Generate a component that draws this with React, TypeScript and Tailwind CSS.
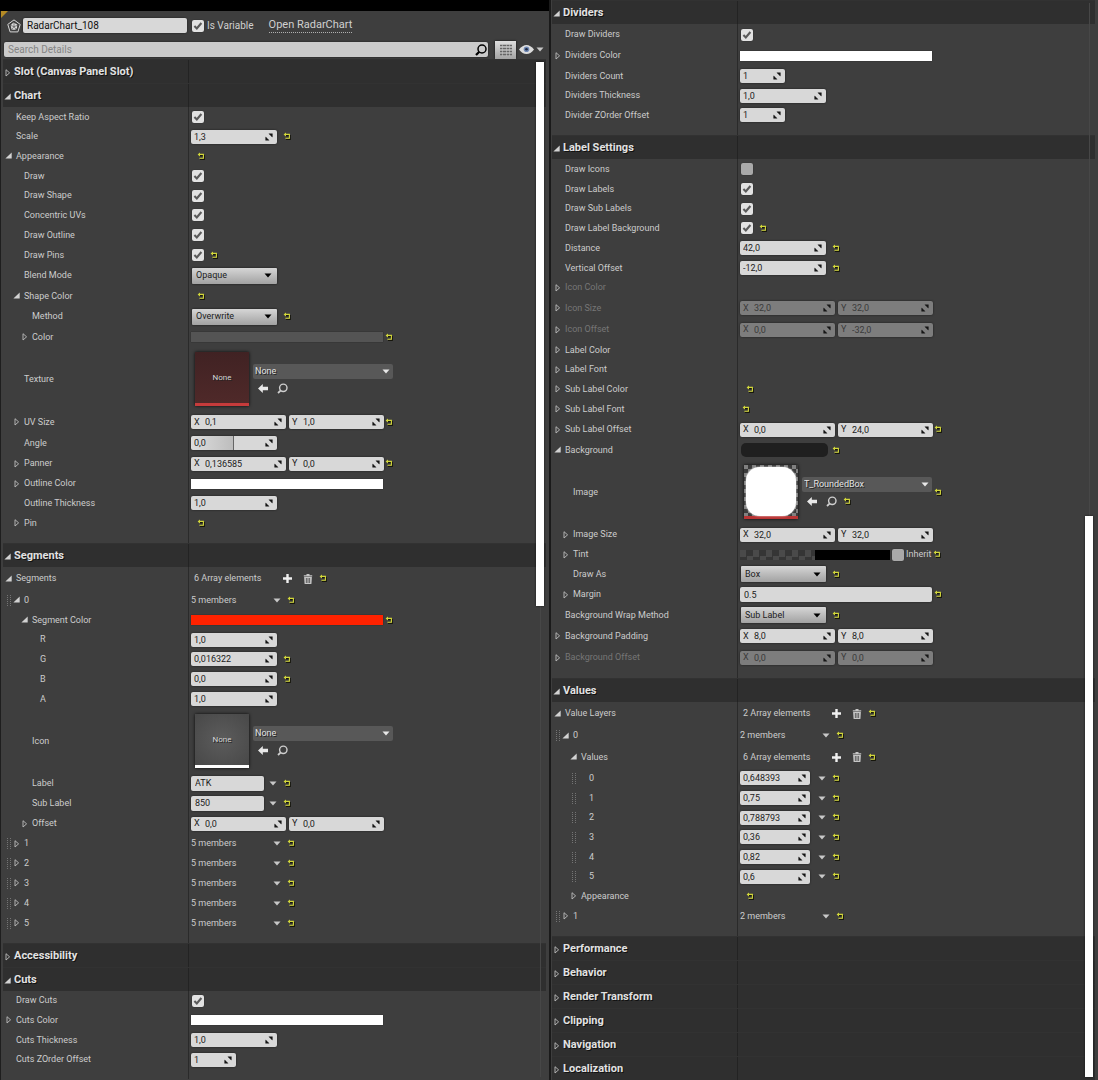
import React, { createContext, useContext, useId } from "react";

type Height = 19 | 20 | 21 | 22 | 23 | 64;
type Level = 0 | 1 | 2 | 3;

const rowHeight: Record<Height, string> = {
  19: "h-[19px]",
  20: "h-5",
  21: "h-[21px]",
  22: "h-[22px]",
  23: "h-[23px]",
  64: "h-16",
};

const indent: Record<Level, string> = {
  0: "pl-[5px]",
  1: "pl-[13px]",
  2: "pl-[21px]",
  3: "pl-[29px]",
};

const handleIndent: Record<Level, string> = {
  0: "pl-0",
  1: "pl-[7px]",
  2: "pl-[15px]",
  3: "pl-[23px]",
};

const RowContext = createContext({ id: "", label: "" });

/* ---------- glyphs ---------- */

function Arrow({ open }: { open?: boolean }) {
  return open ? (
    <svg viewBox="0 0 8 8" className="size-2 shrink-0" aria-hidden="true">
      <path d="M6.7 0.4V6.6H0.4Z" fill="#d2d2d2" />
    </svg>
  ) : (
    <svg viewBox="0 0 8 8" className="size-2 shrink-0" aria-hidden="true">
      <path d="M2 0.7V7L5.6 3.85Z" fill="none" stroke="#bdbdbd" strokeWidth="0.9" />
    </svg>
  );
}

function Handle() {
  return (
    <svg viewBox="0 0 4 11" className="mr-0.5 h-[11px] w-1 shrink-0" aria-hidden="true">
      <path d="M0.5 0V11M3.5 0V11" stroke="#747474" strokeDasharray="1 1" />
    </svg>
  );
}

function Caret({ className = "text-[#c8c8c8]" }: { className?: string }) {
  return (
    <svg viewBox="0 0 8 5" className={"h-[5px] w-2 shrink-0 " + className} aria-hidden="true">
      <path d="M0.5 0.5H7.5L4 4.5Z" fill="currentColor" />
    </svg>
  );
}

function Reset({ className = "ml-[7px]" }: { className?: string }) {
  const { label } = useContext(RowContext);
  return (
    <button type="button" aria-label={"Reset " + label} className={"shrink-0 " + className}>
      <svg viewBox="0.6 0.8 7 7" className="block size-[7px] overflow-visible" aria-hidden="true">
        <path d="M2.5 3.4H6.9V7.3H2.6" fill="none" stroke="#16160c" strokeWidth="1.1" />
        <path d="M2 2.2H6V6.1H2" fill="none" stroke="#d3d83a" strokeWidth="1.1" />
        <path d="M0.2 2.2L2.6 0.2V4.2Z" fill="#d3d83a" />
      </svg>
    </button>
  );
}

function Spin() {
  return (
    <svg viewBox="0 0 8 8" className="mr-1 size-2 shrink-0" aria-hidden="true">
      <path d="M3.4 0.4H7.6V4.6Q6.6 1.9 3.4 0.4Z" fill="#151515" />
      <path d="M0.4 3.4V7.6H4.6Q1.6 6.4 0.4 3.4Z" fill="#151515" />
      <path d="M4 1H7V4Z M1 4V7H4Z" fill="#151515" />
    </svg>
  );
}

/* ---------- controls ---------- */

function Check({ off, id, label }: { off?: boolean; id?: string; label?: string }) {
  const row = useContext(RowContext);
  return (
    <span className="relative ml-px block size-3 shrink-0">
      <input
        type="checkbox"
        id={id ?? row.id}
        aria-label={label}
        defaultChecked={!off}
        className="peer block size-3 appearance-none rounded-[2px] bg-[#a9a9a9] shadow-[0_0_1px_#1c1c1c] checked:bg-[#e2e2e2]"
      />
      <svg
        viewBox="0 0 12 12"
        className="pointer-events-none absolute inset-0 hidden size-3 peer-checked:block"
        aria-hidden="true"
      >
        <path d="M2.4 6L4.8 8.4L9.4 3" fill="none" stroke="#5a5a5a" strokeWidth="2.1" />
      </svg>
    </span>
  );
}

const field = "flex items-center rounded-[2px] shadow-[0_0_2px_#1a1a1a]";

function Num({
  value,
  width = "w-[86px]",
  bg = "bg-[#d8d8d8]",
}: {
  value: string;
  width?: string;
  bg?: string;
}) {
  const { id } = useContext(RowContext);
  return (
    <span className={field + " h-[14px] shrink-0 " + width + " " + bg}>
      <input id={id} defaultValue={value} className="h-[14px] w-0 flex-1 bg-transparent pl-[3px] text-[#1c1c1c] outline-none" />
      <Spin />
    </span>
  );
}

function Axis({ name, value, disabled }: { name: string; value: string; disabled?: boolean }) {
  const { label } = useContext(RowContext);
  return (
    <label
      className={
        field + " h-[14px] w-[95px] shrink-0 text-[#1c1c1c] " + (disabled ? "bg-[#7d7d7d]" : "bg-[#d8d8d8]")
      }
    >
      <span className={"w-3.5 pl-[3px] " + (disabled ? "text-[#3a3a3a]" : "")}>{name}</span>
      <input
        aria-label={label + " " + name}
        disabled={disabled}
        defaultValue={value}
        className="h-[14px] w-0 flex-1 bg-transparent text-[#1c1c1c] outline-none disabled:text-[#3a3a3a]"
      />
      <Spin />
    </label>
  );
}

function Vec({ x, y, disabled }: { x: string; y: string; disabled?: boolean }) {
  return (
    <span className="flex gap-[3px]">
      <Axis name="X" value={x} disabled={disabled} />
      <Axis name="Y" value={y} disabled={disabled} />
    </span>
  );
}

function Text({ value, width }: { value: string; width: string }) {
  const { id } = useContext(RowContext);
  return (
    <input
      id={id}
      defaultValue={value}
      className={"h-[15px] shrink-0 rounded-[2px] bg-[#d8d8d8] px-1 text-[#1c1c1c] shadow-[0_0_2px_#1a1a1a] outline-none " + width}
    />
  );
}

function Menu({ value }: { value: string }) {
  const { id } = useContext(RowContext);
  return (
    <span className="relative ml-px flex h-4 w-[85px] shrink-0 items-center">
      <select
        id={id}
        className="h-4 w-full appearance-none rounded-[1px] bg-linear-to-b from-[#d6d6d6] to-[#a2a2a2] pl-1 text-[#1c1c1c] shadow-[0_0_2px_#111]"
      >
        <option>{value}</option>
      </select>
      <Caret className="pointer-events-none absolute right-[5px] text-black" />
    </span>
  );
}

function Swatch({ color }: { color: string }) {
  const { id } = useContext(RowContext);
  return <button type="button" id={id} className={"h-2.5 w-48 shrink-0 shadow-[0_0_1px_#222] " + color} />;
}

function CaretButton({ className }: { className: string }) {
  const { label } = useContext(RowContext);
  return (
    <button type="button" aria-label={"Options for " + label} className={className}>
      <Caret />
    </button>
  );
}

function Members({ count }: { count: number }) {
  return (
    <>
      <span className="w-[82px] shrink-0">{count} members</span>
      <CaretButton className="" />
      <Reset />
    </>
  );
}

function ArrayTools({ count }: { count: number }) {
  return (
    <>
      <span className="ml-[3px] w-[89px] shrink-0">{count} Array elements</span>
      <button type="button" aria-label="Add element">
        <svg viewBox="0 0 9 9" className="block size-[9px]" aria-hidden="true">
          <path d="M4.5 0V9M0 4.5H9" stroke="#f0f0f0" strokeWidth="2.4" />
        </svg>
      </button>
      <button type="button" aria-label="Remove all elements" className="ml-[11px]">
        <svg viewBox="0 0 10 10" className="block size-2.5" aria-hidden="true">
          <path d="M0.8 1.2H3.5V0H6.5V1.2H9.2V2.4H0.8Z" fill="#c6c6c6" />
          <path d="M1.1 3H8.9L8.4 10H1.6Z" fill="#c6c6c6" />
          <path d="M3.4 4V9M5 4V9M6.6 4V9" stroke="#4a4a4a" strokeWidth="0.8" />
        </svg>
      </button>
      <Reset />
    </>
  );
}

function Asset({
  name,
  width = "w-[140px]",
  reset,
  thumb,
}: {
  name: string;
  width?: string;
  reset?: boolean;
  thumb: React.ReactNode;
}) {
  const { id } = useContext(RowContext);
  return (
    <>
      {thumb}
      <span className="ml-1 flex flex-col gap-1">
        <span className={"relative flex h-[15px] items-center " + width}>
          <select
            id={id}
            className="h-[15px] w-full appearance-none rounded-[2px] bg-[#585858] pl-0.5 text-[#e2e2e2] [text-shadow:1px_1px_0_#222]"
          >
            <option>{name}</option>
          </select>
          <Caret className="pointer-events-none absolute right-[3px] text-[#e8e8e8]" />
        </span>
        <span className="flex h-3 items-center pl-[5px]">
          <button type="button" aria-label="Use selected asset">
            <svg viewBox="0 0 10 9" className="block h-[9px] w-2.5" aria-hidden="true">
              <path d="M0 4.5L4.8 0V2.7H10V6.3H4.8V9Z" fill="#e8e8e8" />
            </svg>
          </button>
          <button type="button" aria-label="Browse to asset" className="ml-[9px] text-[#cfcfcf]">
            <svg viewBox="0 0 11 11" className="block size-[11px]" aria-hidden="true">
              <circle cx="6.3" cy="4.8" r="3.7" fill="none" stroke="currentColor" strokeWidth="1.4" />
              <path d="M3.8 7.4L1 10" stroke="currentColor" strokeWidth="1.8" />
            </svg>
          </button>
          {reset && <Reset />}
        </span>
      </span>
    </>
  );
}

const thumbBase = "ml-1 flex size-[54px] shrink-0 shadow-[0_0_3px_#0a0a0a]";

function EmptyThumb({ tone }: { tone: string }) {
  return (
    <button
      type="button"
      className={thumbBase + " items-center justify-center border-b-3 text-[8px] text-[#d4d4d4] [text-shadow:1px_1px_0_#222] " + tone}
    >
      None
    </button>
  );
}

/* ---------- structure ---------- */

function Row({
  label,
  level = 0,
  h = 20,
  open,
  closed,
  handle,
  dim,
  plain,
  children,
}: {
  label: string;
  level?: Level;
  h?: Height;
  open?: boolean;
  closed?: boolean;
  handle?: boolean;
  dim?: boolean;
  plain?: boolean;
  children?: React.ReactNode;
}) {
  const id = useId();
  const tone = dim ? "text-[#767676]" : "text-[#cccccc]";
  return (
    <RowContext.Provider value={{ id, label }}>
      <div className={"grid grid-cols-[189px_minmax(0,1fr)] " + rowHeight[h]}>
        <div
          className={
            "flex items-center border-r border-[#2a2a2a] whitespace-nowrap " +
            (handle ? handleIndent[level] : indent[level])
          }
        >
          {handle && <Handle />}
          {open || closed ? (
            <button type="button" aria-expanded={!!open} aria-label={label} className="shrink-0">
              <Arrow open={open} />
            </button>
          ) : (
            <span className="w-2 shrink-0" />
          )}
          {plain ? (
            <span className={"ml-[3px] " + tone}>{label}</span>
          ) : (
            <label htmlFor={id} className={"ml-[3px] " + tone}>
              {label}
            </label>
          )}
        </div>
        <div className="flex items-center pl-0.5 whitespace-nowrap">{children}</div>
      </div>
    </RowContext.Provider>
  );
}

function Category({ title, open, children }: { title: string; open?: boolean; children?: React.ReactNode }) {
  return (
    <section>
      <h2 className="mx-[3px] border-t border-[#323232] bg-[#2f2f2f]">
        <button type="button" aria-expanded={!!open} className="grid h-[23px] w-full grid-cols-[186px_minmax(0,1fr)] text-left">
          <span className="flex h-full items-center gap-0.5 border-r border-[#232323] pl-px text-[11px] font-bold text-[#e2e2e2] [text-shadow:1px_1px_0_#111]">
            <span className="pt-0.5">
              <Arrow open={open} />
            </span>
            {title}
          </span>
        </button>
      </h2>
      {children}
      {open && <div className="h-2.5 w-[189px] border-r border-[#2a2a2a]" />}
    </section>
  );
}

function Scrollbar({ thumb }: { thumb: string }) {
  return (
    <div className="absolute inset-y-[3px] right-[5px] w-2">
      <div className="mx-auto h-full w-px bg-[#474747]" />
      <div className={"absolute inset-x-0 bg-white shadow-[0_0_2px_#111] " + thumb} />
    </div>
  );
}

function Header() {
  return (
    <header className="relative">
      <div className="h-[11px] bg-black" />
      <svg viewBox="0 0 7 7" className="absolute top-[11px] left-px size-[7px]" aria-hidden="true">
        <path d="M0 0H7L0 7Z" fill="#b48a24" />
      </svg>
      <div className="flex h-[29px] items-center pl-[7px] text-[10px] text-[#d0d0d0]">
        <svg viewBox="0 0 14 14" className="size-3.5 shrink-0" fill="none" stroke="#d8d8d8" aria-hidden="true">
          <path d="M7 0.9L13.2 5.4L10.9 12.9H3.1L0.8 5.4Z" />
          <path d="M6.4 3.4L10.2 5.4L10 9L8.4 10.8H4.6L3.6 6.2Z" fill="#dcdcdc" stroke="none" />
          <path d="M7 2.5V7.6M12.2 5.8L7 7.6M10.2 12L7 7.6M3.8 12L7 7.6M1.8 5.8L7 7.6" stroke="#555" strokeWidth="0.7" />
        </svg>
        <input
          aria-label="Widget name"
          defaultValue="RadarChart_108"
          className="ml-0.5 h-[15px] w-[164px] shrink-0 rounded-[2px] bg-[#d8d8d8] px-1 text-[#111] shadow-[0_0_2px_#1a1a1a] outline-none"
        />
        <span className="ml-1">
          <Check id="is-variable" />
        </span>
        <label htmlFor="is-variable" className="ml-[3px]">
          Is Variable
        </label>
        <a href="#radar-chart" className="ml-[15px] border-b border-dotted border-[#b0b0b0] pb-0.5 text-[11px]">
          Open RadarChart
        </a>
      </div>
      <div className="flex h-[19px] items-center pl-1">
        <div className={field + " h-[15px] min-w-0 flex-1 bg-[#cbcbcb]"}>
          <input
            type="search"
            aria-label="Search Details"
            placeholder="Search Details"
            className="h-[15px] min-w-0 flex-1 bg-transparent pl-1 text-[10px] outline-none placeholder:text-[#858585]"
          />
          <button type="button" aria-label="Search" className="mr-px text-black">
            <svg viewBox="0 0 12 12" className="block size-3" aria-hidden="true">
              <circle cx="7" cy="5" r="4" fill="none" stroke="currentColor" strokeWidth="1.5" />
              <path d="M4.3 7.7L1 11" stroke="currentColor" strokeWidth="2.2" />
            </svg>
          </button>
        </div>
        <button
          type="button"
          aria-label="Property matrix"
          className="ml-[7px] flex h-[18px] w-[21px] shrink-0 items-center justify-center bg-linear-to-b from-[#dedede] to-[#a4a4a4] shadow-[0_0_2px_#111]"
        >
          <svg viewBox="0 0 12 12" className="size-3" aria-hidden="true">
            <path d="M0 1.5H12M0 4.5H12M0 7.5H12M0 10.5H12" stroke="#666" strokeWidth="1.4" />
            <path d="M2.5 0V12M6.5 0V12M9.5 0V12" stroke="#c4c4c4" strokeWidth="0.6" />
          </svg>
        </button>
        <button type="button" aria-label="View options" className="mr-[5px] ml-[3px] flex shrink-0 items-center gap-0.5">
          <svg viewBox="0 0 15 9" className="h-[9px] w-[15px]" aria-hidden="true">
            <path d="M0 4.5Q3.5 0 7.5 0T15 4.5Q11.5 9 7.5 9T0 4.5Z" fill="#dcdcdc" />
            <circle cx="7.5" cy="4.3" r="2.8" fill="#6f88b4" />
            <circle cx="7.5" cy="4.3" r="1.3" fill="#1d2740" />
          </svg>
          <Caret />
        </button>
      </div>
    </header>
  );
}

function LeftPanel() {
  return (
    <div className="flex flex-col border-l border-[#1e1e1e] bg-[#3e3e3e]">
      <div className="-ml-px">
        <Header />
      </div>
      <div className="relative -ml-px flex-1">
        <Category title="Slot (Canvas Panel Slot)" />
        <Category title="Chart" open>
          <Row label="Keep Aspect Ratio"><Check /></Row>
          <Row label="Scale" h={19}><Num value="1,3" /><Reset /></Row>
          <Row label="Appearance" open plain><Reset /></Row>
          <Row label="Draw" level={1}><Check /></Row>
          <Row label="Draw Shape" level={1} h={19}><Check /></Row>
          <Row label="Concentric UVs" level={1}><Check /></Row>
          <Row label="Draw Outline" level={1}><Check /></Row>
          <Row label="Draw Pins" level={1}><Check /><Reset /></Row>
          <Row label="Blend Mode" level={1} h={21}><Menu value="Opaque" /></Row>
          <Row label="Shape Color" level={1} open plain><Reset /></Row>
          <Row label="Method" level={2} h={21}><Menu value="Overwrite" /><Reset /></Row>
          <Row label="Color" level={2} closed><Swatch color="bg-[#545454]" /><Reset className="ml-[3px]" /></Row>
          <Row label="Texture" level={1} h={64}>
            <Asset name="None" thumb={<EmptyThumb tone="border-[#c63b3b] bg-linear-to-b from-[#402223] to-[#4f2929]" />} />
          </Row>
          <Row label="UV Size" level={1} closed plain h={22}><Vec x="0,1" y="1,0" /><Reset className="ml-0.5" /></Row>
          <Row label="Angle" level={1}>
            <Num value="0,0" bg="bg-[linear-gradient(to_right,#dedede_0%,#bdbdbd_49%,#666_49%,#666_50%,#d8d8d8_50%)]" />
          </Row>
          <Row label="Panner" level={1} closed plain h={21}><Vec x="0,136585" y="0,0" /><Reset className="ml-0.5" /></Row>
          <Row label="Outline Color" level={1} closed h={19}><Swatch color="bg-white" /></Row>
          <Row label="Outline Thickness" level={1}><Num value="1,0" /></Row>
          <Row label="Pin" level={1} closed plain><Reset /></Row>
        </Category>
        <Category title="Segments" open>
          <Row label="Segments" open plain h={23}><ArrayTools count={6} /></Row>
          <Row label="0" level={1} open handle plain><Members count={5} /></Row>
          <Row label="Segment Color" level={2} open><Swatch color="bg-[#ff2200]" /><Reset className="ml-[3px]" /></Row>
          <Row label="R" level={3} h={19}><Num value="1,0" /></Row>
          <Row label="G" level={3}><Num value="0,016322" /><Reset /></Row>
          <Row label="B" level={3}><Num value="0,0" /><Reset /></Row>
          <Row label="A" level={3}><Num value="1,0" /></Row>
          <Row label="Icon" level={2} h={64}>
            <Asset name="None" thumb={<EmptyThumb tone="border-white bg-radial from-[#5c5c5c] to-[#484848]" />} />
          </Row>
          <Row label="Label" level={2}>
            <Text value="ATK" width="w-[73px]" /><CaretButton className="ml-[5px]" /><Reset />
          </Row>
          <Row label="Sub Label" level={2}>
            <Text value="850" width="w-[73px]" /><CaretButton className="ml-[5px]" /><Reset />
          </Row>
          <Row label="Offset" level={2} closed plain h={21}><Vec x="0,0" y="0,0" /></Row>
          <Row label="1" level={1} closed handle plain h={19}><Members count={5} /></Row>
          <Row label="2" level={1} closed handle plain><Members count={5} /></Row>
          <Row label="3" level={1} closed handle plain><Members count={5} /></Row>
          <Row label="4" level={1} closed handle plain><Members count={5} /></Row>
          <Row label="5" level={1} closed handle plain><Members count={5} /></Row>
        </Category>
        <Category title="Accessibility" />
        <Category title="Cuts" open>
          <Row label="Draw Cuts" h={19}><Check /></Row>
          <Row label="Cuts Color" closed><Swatch color="bg-white" /></Row>
          <Row label="Cuts Thickness"><Num value="1,0" /></Row>
          <Row label="Cuts ZOrder Offset" h={19}><Num value="1" width="w-[45px]" /></Row>
        </Category>
        <Scrollbar thumb="top-0 h-[53.6%]" />
      </div>
    </div>
  );
}

const layerValues: { value: string; h: Height }[] = [
  { value: "0,648393", h: 20 },
  { value: "0,75", h: 20 },
  { value: "0,788793", h: 19 },
  { value: "0,36", h: 20 },
  { value: "0,82", h: 20 },
  { value: "0,6", h: 19 },
];

function RightPanel() {
  return (
    <div className="relative border-l-2 border-[#1a1a1a] bg-[#3e3e3e]">
      <div className="-ml-0.5">
        <Category title="Dividers" open>
          <Row label="Draw Dividers" h={21}><Check /></Row>
          <Row label="Dividers Color" closed h={21}><Swatch color="bg-white" /></Row>
          <Row label="Dividers Count"><Num value="1" width="w-[45px]" /></Row>
          <Row label="Dividers Thickness" h={19}><Num value="1,0" /></Row>
          <Row label="Divider ZOrder Offset"><Num value="1" width="w-[45px]" /></Row>
        </Category>
        <Category title="Label Settings" open>
          <Row label="Draw Icons"><Check off /></Row>
          <Row label="Draw Labels"><Check /></Row>
          <Row label="Draw Sub Labels" h={19}><Check /></Row>
          <Row label="Draw Label Background"><Check /><Reset /></Row>
          <Row label="Distance"><Num value="42,0" /><Reset /></Row>
          <Row label="Vertical Offset"><Num value="-12,0" /><Reset /></Row>
          <Row label="Icon Color" closed dim plain h={19} />
          <Row label="Icon Size" closed dim plain h={22}><Vec x="32,0" y="32,0" disabled /></Row>
          <Row label="Icon Offset" closed dim plain h={21}><Vec x="0,0" y="-32,0" disabled /></Row>
          <Row label="Label Color" closed plain />
          <Row label="Label Font" closed plain h={19} />
          <Row label="Sub Label Color" closed plain><Reset /></Row>
          <Row label="Sub Label Font" closed plain><Reset className="ml-[3px]" /></Row>
          <Row label="Sub Label Offset" closed plain h={21}><Vec x="0,0" y="24,0" /><Reset className="ml-0.5" /></Row>
          <Row label="Background" open plain>
            <span className="ml-px h-3.5 w-[87px] rounded-[5px] bg-[#1f1f1f]" /><Reset className="ml-[5px]" />
          </Row>
          <Row label="Image" level={1} h={64}>
            <Asset
              name="T_RoundedBox"
              width="w-[130px]"
              reset
              thumb={
                <button
                  type="button"
                  aria-label="T_RoundedBox thumbnail"
                  className={thumbBase + " border-b-3 border-[#b93434] bg-[repeating-conic-gradient(#3a3a3a_0_25%,#808080_0_50%)] bg-[length:8px_8px] px-0.5 pt-0.5"}
                >
                  <span className="size-full rounded-[14px] bg-white shadow-[0_0_2px_#fff]" />
                </button>
              }
            />
            <Reset className="ml-[3px]" />
          </Row>
          <Row label="Image Size" level={1} closed plain h={21}><Vec x="32,0" y="32,0" /></Row>
          <Row label="Tint" level={1} closed plain h={19}>
            <button type="button" aria-label="Tint color" className="flex h-2.5 w-[150px] shrink-0">
              <span className="h-full flex-1 bg-[repeating-conic-gradient(#353535_0_25%,#4a4a4a_0_50%)] bg-[length:13px_13px]" />
              <span className="h-full flex-1 bg-black" />
            </button>
            <span className="ml-px">
              <Check off id="inherit-tint" />
            </span>
            <label htmlFor="inherit-tint" className="ml-0.5">Inherit</label>
            <Reset className="ml-[3px]" />
          </Row>
          <Row label="Draw As" level={1}><Menu value="Box" /><Reset /></Row>
          <Row label="Margin" level={1} closed h={21}><Text value="0.5" width="w-48" /><Reset className="ml-[3px]" /></Row>
          <Row label="Background Wrap Method"><Menu value="Sub Label" /><Reset /></Row>
          <Row label="Background Padding" closed plain h={22}><Vec x="8,0" y="8,0" /></Row>
          <Row label="Background Offset" closed dim plain h={21}><Vec x="0,0" y="0,0" disabled /></Row>
        </Category>
        <Category title="Values" open>
          <Row label="Value Layers" open plain h={23}><ArrayTools count={2} /></Row>
          <Row label="0" level={1} open handle plain h={21}><Members count={2} /></Row>
          <Row label="Values" level={2} open plain h={22}><ArrayTools count={6} /></Row>
          {layerValues.map((item, index) => (
            <Row key={index} label={String(index)} level={3} handle h={item.h}>
              <Num value={item.value} width="w-[70px]" />
              <CaretButton className="ml-2" />
              <Reset />
            </Row>
          ))}
          <Row label="Appearance" level={2} closed plain><Reset /></Row>
          <Row label="1" level={1} closed handle plain><Members count={2} /></Row>
        </Category>
        <Category title="Performance" />
        <Category title="Behavior" />
        <Category title="Render Transform" />
        <Category title="Clipping" />
        <Category title="Navigation" />
        <Category title="Localization" />
      </div>
      <Scrollbar thumb="bottom-0 h-[52.2%]" />
    </div>
  );
}

export default function App() {
  return (
    <main className="grid min-h-screen grid-cols-2 bg-[#3e3e3e] font-['Roboto',sans-serif] text-[9px] leading-none text-[#cccccc]">
      <LeftPanel />
      <RightPanel />
    </main>
  );
}
